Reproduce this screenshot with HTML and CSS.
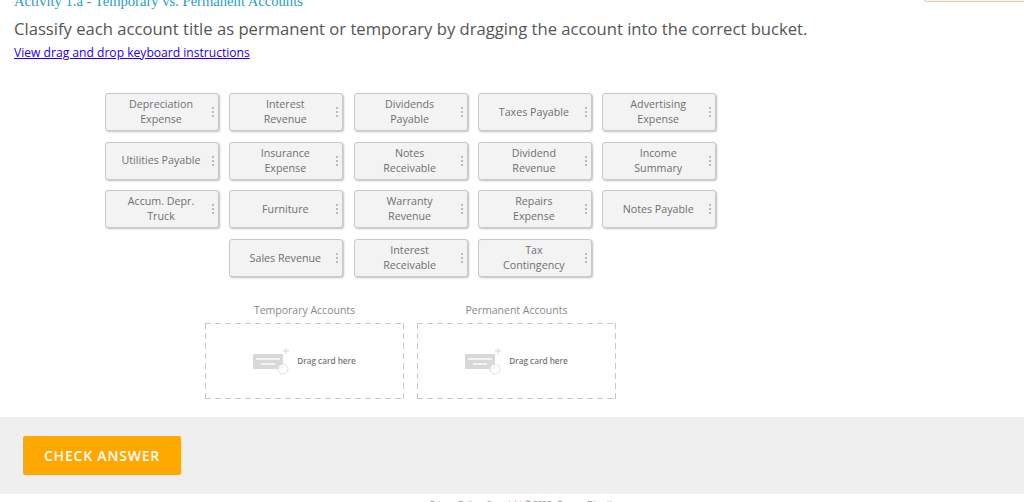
FILE: index.html
```
<!DOCTYPE html>
<html lang="en">
<head>
<meta charset="utf-8">
<title>Activity 1.a - Temporary vs. Permanent Accounts</title>
<link rel="stylesheet" href="styles.css">
</head>
<body>
<div class="notice"></div>
<main class="content">
  <h1 class="title">Activity 1.a - Temporary vs. Permanent Accounts</h1>
  <p class="question">Classify each account title as permanent or temporary by dragging the account into the correct bucket.</p>
  <a class="instructions" href="#">View drag and drop keyboard instructions</a>
  <div class="cards">
    <div class="card"><span class="label">Depreciation Expense</span><span class="grip"></span></div>
    <div class="card"><span class="label">Interest Revenue</span><span class="grip"></span></div>
    <div class="card"><span class="label">Dividends Payable</span><span class="grip"></span></div>
    <div class="card"><span class="label">Taxes Payable</span><span class="grip"></span></div>
    <div class="card"><span class="label">Advertising Expense</span><span class="grip"></span></div>
    <div class="card"><span class="label">Utilities Payable</span><span class="grip"></span></div>
    <div class="card"><span class="label">Insurance Expense</span><span class="grip"></span></div>
    <div class="card"><span class="label">Notes Receivable</span><span class="grip"></span></div>
    <div class="card"><span class="label">Dividend Revenue</span><span class="grip"></span></div>
    <div class="card"><span class="label">Income Summary</span><span class="grip"></span></div>
    <div class="card"><span class="label">Accum. Depr. Truck</span><span class="grip"></span></div>
    <div class="card"><span class="label">Furniture</span><span class="grip"></span></div>
    <div class="card"><span class="label">Warranty Revenue</span><span class="grip"></span></div>
    <div class="card"><span class="label">Repairs Expense</span><span class="grip"></span></div>
    <div class="card"><span class="label">Notes Payable</span><span class="grip"></span></div>
    <div class="card start-second"><span class="label">Sales Revenue</span><span class="grip"></span></div>
    <div class="card"><span class="label">Interest Receivable</span><span class="grip"></span></div>
    <div class="card"><span class="label">Tax Contingency</span><span class="grip"></span></div>
  </div>
  <div class="buckets">
    <section class="bucket">
      <h2 class="bucket-title">Temporary Accounts</h2>
      <div class="dropzone">
        <svg class="drop-icon" width="36" height="28" viewBox="0 0 36 28" aria-hidden="true">
          <rect x="0" y="7" width="30" height="15" rx="1" fill="#d8d8d8"/>
          <rect x="3" y="11" width="24" height="2" fill="#f4f4f4"/>
          <rect x="8" y="16" width="14" height="2" fill="#f4f4f4"/>
          <circle cx="30" cy="22" r="5" fill="#ffffff" fill-opacity=".75" stroke="#e2e2e2"/>
          <path d="M33 1v6M30 4h6" stroke="#d4d4d4" fill="none"/>
        </svg>
        <span class="drop-text">Drag card here</span>
      </div>
    </section>
    <section class="bucket">
      <h2 class="bucket-title">Permanent Accounts</h2>
      <div class="dropzone">
        <svg class="drop-icon" width="36" height="28" viewBox="0 0 36 28" aria-hidden="true">
          <rect x="0" y="7" width="30" height="15" rx="1" fill="#d8d8d8"/>
          <rect x="3" y="11" width="24" height="2" fill="#f4f4f4"/>
          <rect x="8" y="16" width="14" height="2" fill="#f4f4f4"/>
          <circle cx="30" cy="22" r="5" fill="#ffffff" fill-opacity=".75" stroke="#e2e2e2"/>
          <path d="M33 1v6M30 4h6" stroke="#d4d4d4" fill="none"/>
        </svg>
        <span class="drop-text">Drag card here</span>
      </div>
    </section>
  </div>
</main>
<div class="action-bar">
  <button class="check" type="button">CHECK ANSWER</button>
</div>
<footer class="legal">Privacy Policy &nbsp; Copyright © 2020 &nbsp; Terms &nbsp; Direction</footer>
</body>
</html>
```
FILE: styles.css
```
* { box-sizing: border-box; }
html, body { margin: 0; height: 502px; overflow: hidden; background: #fff; }
body { font-family: "Open Sans", sans-serif; color: #4a4a4a; position: relative; }
.notice {
  position: absolute; top: -9px; left: 923px; width: 120px; height: 11px;
  background: #fdf3e3; border: 1px solid #d9cfc2; border-radius: 4px;
}
.content { height: 417px; padding: 0 0 0 14px; overflow: hidden; }
.title {
  margin: -8px 0 0; font: 400 14.6px/18px "Liberation Serif", serif;
  color: #2a9cc4;
}
.question { margin: 7px 0 0; font-size: 16.64px; line-height: 24px; color: #555; white-space: nowrap; }
.instructions { display: block; width: max-content; margin-top: 3px; font-size: 12.1px; line-height: 18px; color: #2200ee; }
.cards {
  display: grid; grid-template-columns: repeat(5, 114px); column-gap: 10.3px; row-gap: 10.7px;
  margin: 31px 0 0 91px;
}
.card {
  height: 38px; display: flex; align-items: center; position: relative;
  background: #f3f3f3; border: 1px solid #c9c9c9; border-radius: 3px;
  box-shadow: 1px 1px 2px rgba(0,0,0,.25);
  padding: 0 17px 0 15px;
}
.start-second { grid-column-start: 2; }
.label { flex: 1; text-align: center; font-size: 10.7px; line-height: 15px; color: #707070; }
.grip {
  position: absolute; right: 4px; top: 17px; width: 2px; height: 2px; border-radius: 50%;
  background: #a8a8a8; box-shadow: 0 -4px 0 #a8a8a8, 0 4px 0 #a8a8a8;
}
.buckets { display: flex; gap: 13px; margin: 25px 0 0 191px; }
.bucket { width: 199px; }
.bucket-title { margin: 0 0 5px; font-size: 10.5px; font-weight: 400; line-height: 16px; text-align: center; color: #888; }
.dropzone {
  height: 76px; display: flex; align-items: center; justify-content: center; gap: 8px;
  background:
    repeating-linear-gradient(90deg, #c8c8c8 0 6px, transparent 6px 10px) left top / 100% 1px no-repeat,
    repeating-linear-gradient(90deg, #c8c8c8 0 6px, transparent 6px 10px) left bottom / 100% 1px no-repeat,
    repeating-linear-gradient(180deg, #c8c8c8 0 6px, transparent 6px 10px) left top / 1px 100% no-repeat,
    repeating-linear-gradient(180deg, #c8c8c8 0 6px, transparent 6px 10px) right top / 1px 100% no-repeat;
}
.drop-text { font-size: 8.2px; font-weight: 600; color: #777; margin-bottom: 2px; }
.action-bar { height: 77px; background: #efefef; padding: 19px 0 0 23px; }
.check {
  display: block; width: 158px; height: 39px; border: 0; border-radius: 2px; background: #ffa800; color: #fff;
  font: 600 14px/39px "Open Sans", sans-serif; letter-spacing: 0.8px; padding: 0;
}
.legal {
  margin: 3px 0 0 430px; font-size: 8px; line-height: 12px; color: #777; white-space: nowrap;
}
```
